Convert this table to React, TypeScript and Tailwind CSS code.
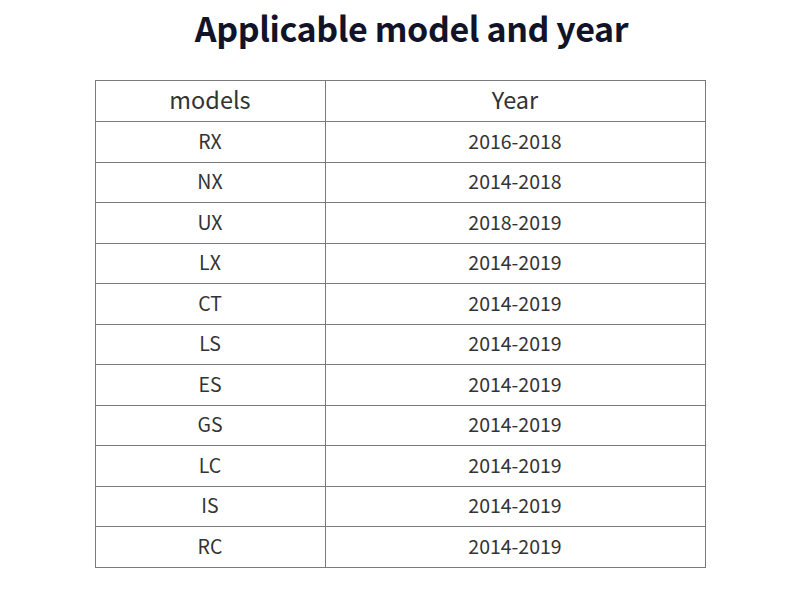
const rows: [string, string][] = [
    ["RX", "2016-2018"],
    ["NX", "2014-2018"],
    ["UX", "2018-2019"],
    ["LX", "2014-2019"],
    ["CT", "2014-2019"],
    ["LS", "2014-2019"],
    ["ES", "2014-2019"],
    ["GS", "2014-2019"],
    ["LC", "2014-2019"],
    ["IS", "2014-2019"],
    ["RC", "2014-2019"],
];

export default function App() {
    return (
        <div
            className="flex h-[600px] w-[800px] flex-col items-center bg-white"
            style={{ fontFamily: '"Noto Sans CJK SC", "Noto Sans", sans-serif' }}
        >
            <h1 className="mt-[6px] pl-[23px] text-[34px] leading-[44px] font-bold tracking-[-0.4px] text-[#111328]">
                Applicable model and year
            </h1>
            <table className="mt-[30px] w-[611px] border-collapse border border-[#7a7a7a] text-[#333]">
                <thead>
                    <tr className="h-[41px]">
                        <th className="w-[230px] border border-[#7a7a7a] pb-[3px] text-[23.5px] font-normal">models</th>
                        <th className="border border-[#7a7a7a] pb-[3px] text-[23.5px] font-normal">Year</th>
                    </tr>
                </thead>
                <tbody>
                    {rows.map(([model, year]) => (
                        <tr key={model} className="h-[40.5px]">
                            <td className="border border-[#7a7a7a] pb-[3px] text-center text-[19.5px]">{model}</td>
                            <td className="border border-[#7a7a7a] pb-[3px] text-center text-[19.5px]">{year}</td>
                        </tr>
                    ))}
                </tbody>
            </table>
        </div>
    );
}
